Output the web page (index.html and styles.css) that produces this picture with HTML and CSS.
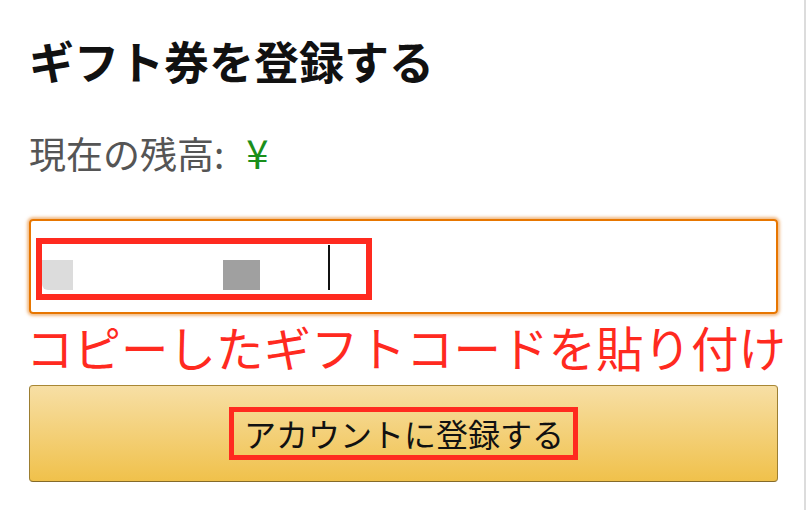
FILE: index.html
```html
<!DOCTYPE html>
<html lang="ja">
<head>
<meta charset="utf-8">
<link rel="stylesheet" href="styles.css">
</head>
<body>
<div class="page">
  <h1 class="title">ギフト券を登録する</h1>
  <div class="balance">現在の残高:<span class="yen">¥</span></div>
  <div class="code-input">
    <div class="mark-box">
      <span class="blur blur-light"></span>
      <span class="blur blur-dark"></span>
      <span class="caret"></span>
    </div>
  </div>
  <div class="note">コピーしたギフトコードを貼り付け</div>
  <div class="submit">
    <span class="submit-label">アカウントに登録する</span>
  </div>
</div>
</body>
</html>
```
FILE: styles.css
```css
html, body {
  margin: 0;
  padding: 0;
  background: #fff;
}
body {
  font-family: "Noto Sans CJK JP", "Noto Sans", sans-serif;
}
.page {
  width: 775px;
  height: 510px;
  padding-left: 29px;
  border-right: 2px solid #dcdcdc;
}
.title {
  margin: 0;
  padding-top: 31px;
  font-size: 45px;
  line-height: 60px;
  font-weight: 700;
  color: #111;
}
.balance {
  margin-top: 37px;
  font-size: 37px;
  line-height: 48px;
  color: #555;
}
.yen {
  margin-left: 22px;
  font-size: 40px;
  color: #1a8f1a;
}
.code-input {
  margin-top: 42px;
  border: 2px solid #e77600;
  border-radius: 4px;
  box-shadow: 0 0 3px 2px rgba(228, 121, 17, 0.5);
  padding: 17px 0 0 5px;
  box-sizing: border-box;
  width: 749px;
  height: 95px;
}
.mark-box {
  width: 336px;
  height: 62px;
  box-sizing: border-box;
  border: 6px solid #ff2a1f;
  display: flex;
  align-items: flex-end;
  padding-bottom: 4px;
}
.blur {
  display: block;
  height: 30px;
}
.blur-light {
  width: 31px;
  background: #dcdcdc;
  border-bottom-left-radius: 6px;
}
.blur-dark {
  margin-left: 150px;
  width: 37px;
  background: #a0a0a0;
}
.caret {
  display: block;
  margin-left: 68px;
  width: 2px;
  height: 45px;
  background: #111;
}
.note {
  margin-top: 6px;
  margin-left: -3px;
  font-size: 47.5px;
  line-height: 54px;
  color: #ff2a1f;
  white-space: nowrap;
}
.submit {
  margin-top: 11px;
  width: 749px;
  height: 97px;
  box-sizing: border-box;
  border: 1px solid;
  border-color: #a88734 #9c7e31 #846a29;
  border-radius: 4px;
  background: linear-gradient(to bottom, #f7dfa5, #f0c14b);
  display: flex;
  align-items: center;
  justify-content: center;
}
.submit-label {
  display: block;
  border: 5px solid #ff2a1f;
  padding: 0 9px 0 10px;
  font-size: 32px;
  line-height: 43px;
  color: #111;
  white-space: nowrap;
}
```
